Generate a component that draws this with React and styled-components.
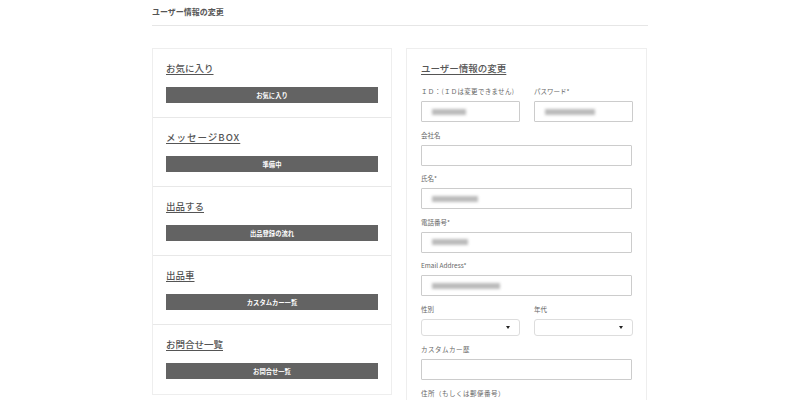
import React from "react";
import styled, { createGlobalStyle } from "styled-components";

const Global = createGlobalStyle`
  html, body { margin: 0; padding: 0; background: #fff; }
  body { font-family: "Noto Sans CJK JP", "Noto Sans", sans-serif; color: #555; }
  * { box-sizing: border-box; }
`;

const Page = styled.div`
  width: 496px;
  margin: 0 auto;
`;

const PageHeader = styled.div`
  height: 26px;
  padding-top: 6px;
  font-size: 8px;
  font-weight: 700;
  color: #555;
  line-height: 12px;
  border-bottom: 1px solid #e6e6e6;
`;

const Columns = styled.div`
  display: grid;
  grid-template-columns: 240px 241px;
  column-gap: 14px;
  margin-top: 22px;
  align-items: start;
`;

const Panel = styled.div`
  border: 1px solid #eee;
  background: #fff;
`;

const Section = styled.div`
  height: 69px;
  padding: 12px 13px 0;
  border-bottom: ${(p) => (p.$last ? "none" : "1px solid #e8e8e8")};
`;

const SectionTitle = styled.div`
  font-size: 9.5px;
  line-height: 14px;
  color: #555;
  font-weight: 500;
  text-decoration: underline;
  text-underline-offset: 2px;
  letter-spacing: ${(p) => p.$spaced || "0"};
`;

const DarkButton = styled.div`
  margin-top: 12px;
  height: 16px;
  background: #636363;
  color: #fff;
  font-size: 6.3px;
  font-weight: 700;
  display: flex;
  align-items: center;
  justify-content: center;
`;

const FormPanel = styled(Panel)`
  padding: 12px 14px 0 14px;
  height: 360px;
  overflow: hidden;
`;

const FormTitle = styled(SectionTitle)`
  margin-bottom: 9px;
`;

const Field = styled.div`
  display: flex;
  flex-direction: column;
`;

const Row = styled.div`
  display: grid;
  grid-template-columns: 99px 99px;
  column-gap: 14px;
`;

const Label = styled.div`
  font-size: 6.5px;
  line-height: 10px;
  height: 17px;
  color: #666;
  padding-top: 2px;
  white-space: nowrap;
  letter-spacing: ${(p) => p.$spaced || "0"};
`;

const Input = styled.div`
  height: 21px;
  border: 1px solid #ccc;
  border-radius: 1px;
  display: flex;
  align-items: center;
  padding-left: 10px;
  margin-bottom: 5.5px;
`;

const Blur = styled.span`
  display: block;
  height: 6px;
  background: #bbb;
  filter: blur(1.4px);
`;

const Select = styled.div`
  height: 17px;
  border: 1px solid #ddd;
  border-radius: 3px;
  display: flex;
  align-items: center;
  justify-content: flex-end;
  padding-right: 9px;
  margin-bottom: 6.5px;
`;

const Caret = styled.span`
  width: 0;
  height: 0;
  border-left: 2.5px solid transparent;
  border-right: 2.5px solid transparent;
  border-top: 3px solid #222;
`;

const sections = [
  { title: "お気に入り", button: "お気に入り" },
  { title: "メッセージBOX", button: "準備中", spaced: "1px" },
  { title: "出品する", button: "出品登録の流れ" },
  { title: "出品車", button: "カスタムカー一覧" },
  { title: "お問合せ一覧", button: "お問合せ一覧" },
];

export default function App() {
  return (
    <>
      <Global />
      <Page>
        <PageHeader>ユーザー情報の変更</PageHeader>
        <Columns>
          <Panel>
            {sections.map((s, i) => (
              <Section key={s.title} $last={i === sections.length - 1}>
                <SectionTitle $spaced={s.spaced}>{s.title}</SectionTitle>
                <DarkButton>{s.button}</DarkButton>
              </Section>
            ))}
          </Panel>
          <FormPanel>
            <FormTitle>ユーザー情報の変更</FormTitle>
            <Row>
              <Field>
                <Label $spaced="0.3px">ＩＤ：(ＩＤは変更できません)</Label>
                <Input>
                  <Blur style={{ width: 34 }} />
                </Input>
              </Field>
              <Field>
                <Label>パスワード*</Label>
                <Input>
                  <Blur style={{ width: 50 }} />
                </Input>
              </Field>
            </Row>
            <Field>
              <Label>会社名</Label>
              <Input />
            </Field>
            <Field>
              <Label>氏名*</Label>
              <Input>
                <Blur style={{ width: 46 }} />
              </Input>
            </Field>
            <Field>
              <Label>電話番号*</Label>
              <Input>
                <Blur style={{ width: 36 }} />
              </Input>
            </Field>
            <Field>
              <Label>Email Address*</Label>
              <Input>
                <Blur style={{ width: 68 }} />
              </Input>
            </Field>
            <Row>
              <Field>
                <Label>性別</Label>
                <Select>
                  <Caret />
                </Select>
              </Field>
              <Field>
                <Label>年代</Label>
                <Select>
                  <Caret />
                </Select>
              </Field>
            </Row>
            <Field>
              <Label $spaced="0.5px">カスタムカー歴</Label>
              <Input />
            </Field>
            <Field>
              <Label $spaced="0.5px">住所（もしくは郵便番号）</Label>
            </Field>
          </FormPanel>
        </Columns>
      </Page>
    </>
  );
}
